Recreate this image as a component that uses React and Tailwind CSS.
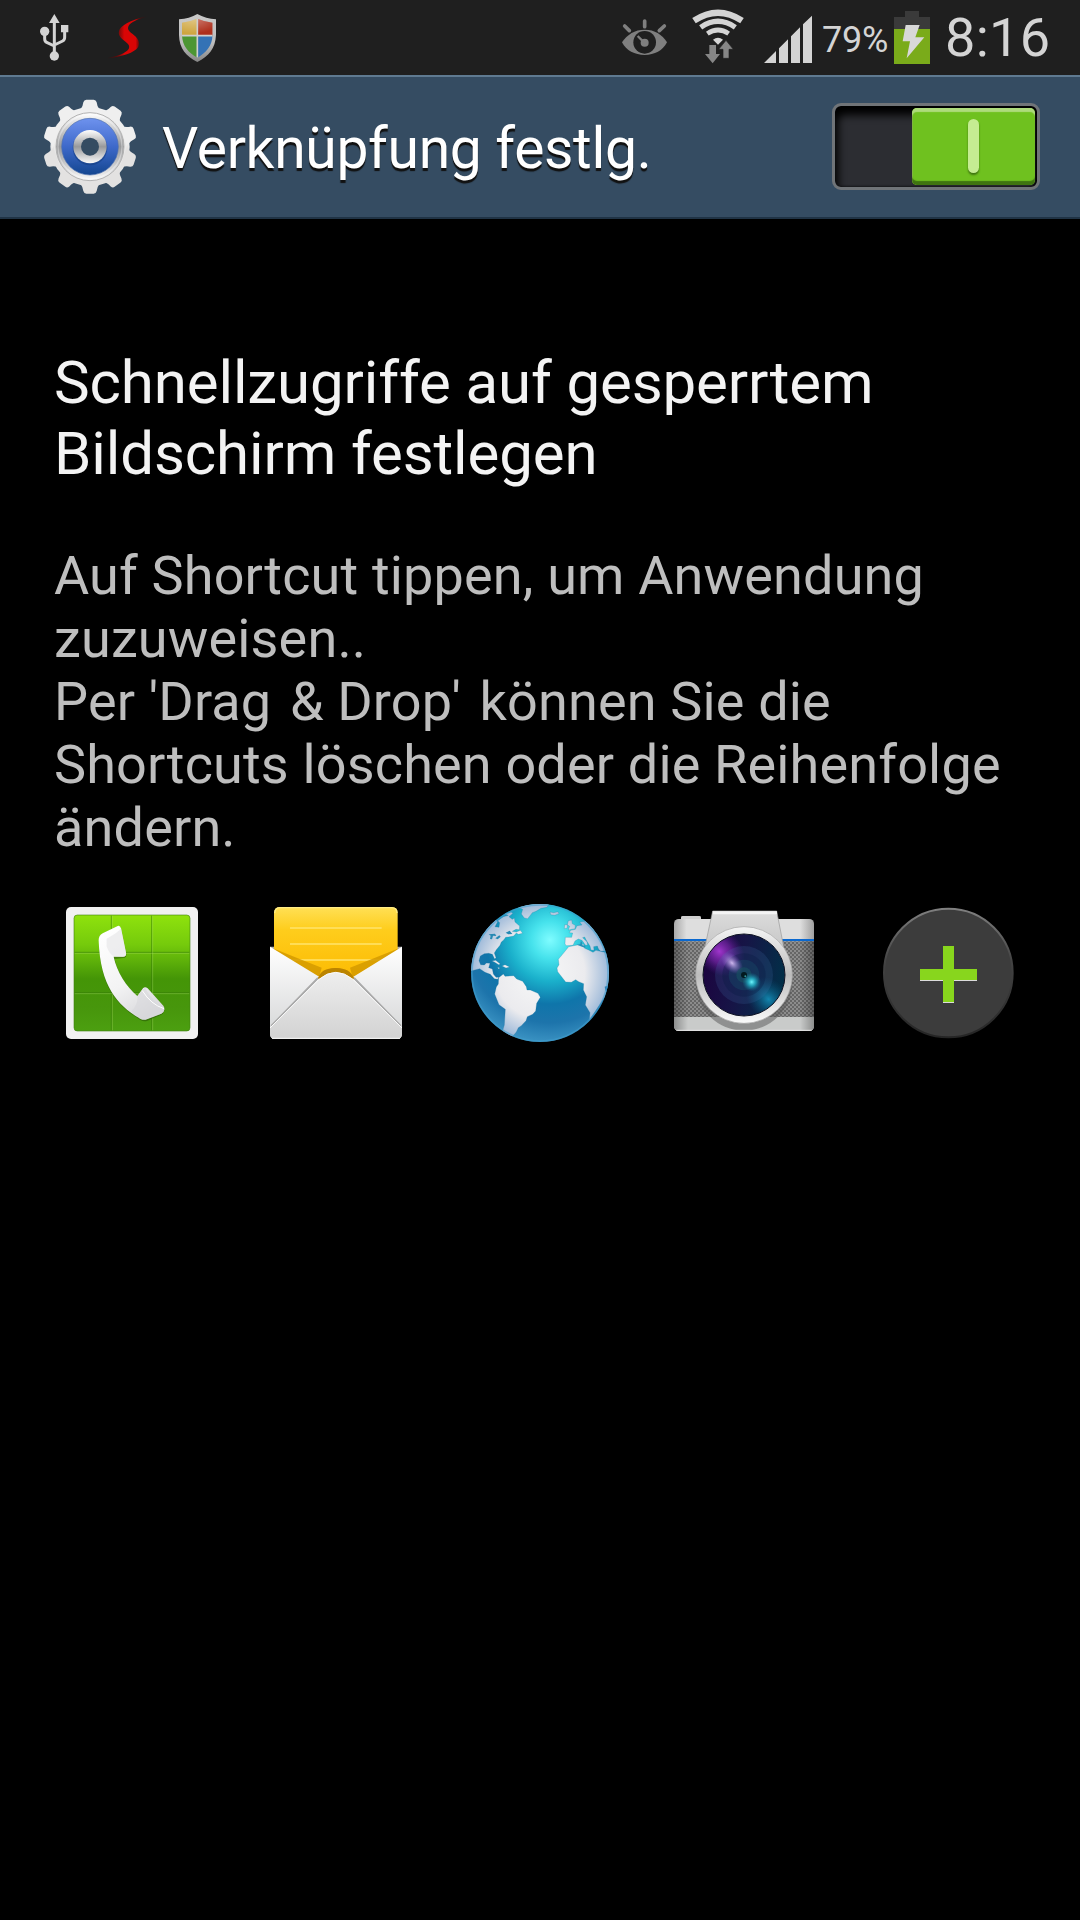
import { useState } from 'react';

// --- Status bar icons ---
const UsbIcon = () => (
    <svg viewBox="120 0 87 225" className="w-[29px] h-[75px] shrink-0" fill="none" stroke="#d4d4d4">
        <path d="M163 60V160M134 100V116Q134 124 140 127L163 138M194 90V112Q194 120 188 123L163 135" strokeWidth="9" />
        <path d="M163 42L179 69H147ZM183 75H205V97H183Z" fill="#d4d4d4" stroke="none" />
        <circle cx="134" cy="94" r="14" fill="#d4d4d4" stroke="none" />
        <circle cx="163" cy="168" r="14" fill="#d4d4d4" stroke="none" />
    </svg>
);

const SwooshIcon = () => (
    <svg viewBox="318 0 123 225" className="w-[41px] h-[75px] shrink-0">
        <defs>
            <linearGradient id="swoosh" x1="0" x2="1" y1="0" y2="0">
                <stop offset="0" stopColor="#500" stopOpacity=".4" />
                <stop offset=".22" stopColor="#700404" stopOpacity=".7" />
                <stop offset=".42" stopColor="#d90505" />
                <stop offset=".7" stopColor="#d90505" />
                <stop offset=".8" stopColor="#700404" stopOpacity=".7" />
                <stop offset="1" stopColor="#400" stopOpacity=".3" />
            </linearGradient>
        </defs>
        <path d="M441 49C405 55 368 70 356 88C350 102 355 110 367 120C381 131 388 136 383 147C375 159 350 169 318 175C362 170 402 158 412 140C418 124 409 113 395 102C383 93 378 87 383 77C390 66 413 56 441 49Z" fill="url(#swoosh)" />
    </svg>
);

const ShieldIcon = () => (
    <svg viewBox="534 0 117 225" className="w-[39px] h-[75px] shrink-0">
        <defs>
            <clipPath id="shieldInner">
                <path d="M592 56Q616 66 638 68V105C636 138 619 158 592 173C565 158 547 138 546 105V68Q569 66 592 56Z" />
            </clipPath>
            <linearGradient id="shieldRim" x1="0" x2="0" y1="0" y2="1">
                <stop offset="0" stopColor="#c9c9c9" />
                <stop offset=".6" stopColor="#bdbdbd" />
                <stop offset="1" stopColor="#858585" />
            </linearGradient>
            <radialGradient id="shieldShine" cx=".4" cy=".1" r=".8">
                <stop offset="0" stopColor="#fff" stopOpacity=".4" />
                <stop offset="1" stopColor="#fff" stopOpacity="0" />
            </radialGradient>
        </defs>
        <path d="M592 42Q618 56 648 58V105C646 146 626 169 592 186C558 169 538 146 537 105V58Q568 56 592 42Z" fill="url(#shieldRim)" />
        <g clipPath="url(#shieldInner)">
            <path d="M540 45H592V107H540Z" fill="#cfa640" />
            <path d="M592 45H645V107H592Z" fill="#ae2f1c" />
            <path d="M540 107H592V185H540Z" fill="#4c9633" />
            <path d="M592 107H645V185H592Z" fill="#3472b5" />
            <path d="M540 45H645V107H540Z" fill="url(#shieldShine)" />
            <path d="M592 45V185M540 107H645" stroke="#cfcfcf" strokeWidth="5" />
        </g>
    </svg>
);

const EyeIcon = () => (
    <svg viewBox="66 0 135 225" className="w-[45px] h-[75px] shrink-0">
        <path d="M66 127C82 103 104 89 134 89S186 103 201 127C188 152 164 165 134 165S79 152 66 127Z" fill="#7f7f7f" />
        <circle cx="134" cy="127" r="34" fill="#1f1f1f" />
        <circle cx="134" cy="128" r="12" fill="#7f7f7f" />
        <path d="M113 108L132 127" stroke="#7f7f7f" strokeWidth="7" />
        <path d="M134 63V80M74 78L88 92M193 78L178 92" stroke="#7f7f7f" strokeWidth="11" strokeLinecap="round" />
    </svg>
);

const WifiIcon = () => (
    <svg viewBox="276 0 156 225" className="w-[52px] h-[75px] shrink-0">
        <g fill="none" stroke="#d4d4d4">
            <path d="M282 62Q354 14 426 62" strokeWidth="19" />
            <path d="M302 82Q354 46 406 82" strokeWidth="16" />
            <path d="M322 101Q354 79 386 101" strokeWidth="14" />
        </g>
        <path d="M339 119Q354 107 369 119L354 134Z" fill="#d4d4d4" />
        <path d="M328 135H348V162H360L338 190L315 162H328Z" fill="#868686" />
        <path d="M369 175V148H356L378 121L400 148H387V175Z" fill="#868686" stroke="#1f1f1f" strokeWidth="2" />
    </svg>
);

const SignalIcon = () => (
    <svg viewBox="492 0 144 225" className="w-[48px] h-[75px] shrink-0">
        <path d="M492 189L528 153V189ZM537 189V145L564 118V189ZM573 189V109L600 82V189ZM609 189V73L636 47V189Z" fill="#d4d4d4" />
    </svg>
);

const BatteryIcon = () => (
    <svg viewBox="882 0 108 225" className="w-[36px] h-[75px] shrink-0">
        <path d="M915 33H957V51H990V87H882V51H915Z" fill="#3a3a3a" />
        <path d="M882 87H990V192H882Z" fill="#7aab1a" />
        <path d="M917 75H959L946 112H973L920 175L930 124H908Z" fill="#d8d8d8" />
    </svg>
);

// --- Title bar ---
const GearIcon = () => (
    <svg viewBox="123 290 294 294" className="w-[98px] h-[98px] shrink-0">
        <defs>
            <linearGradient id="gearBody" x1="0" x2="0" y1="298" y2="580" gradientUnits="userSpaceOnUse">
                <stop offset="0" stopColor="#f3f3f3" />
                <stop offset="1" stopColor="#e0dfde" />
            </linearGradient>
            <linearGradient id="gearRing" x1="0" x2="0" y1="0" y2="1">
                <stop offset="0" stopColor="#fff" />
                <stop offset=".5" stopColor="#98999b" />
                <stop offset="1" stopColor="#fafafa" />
            </linearGradient>
            <linearGradient id="gearBlue" x1="0" x2="0" y1="0" y2="1">
                <stop offset="0" stopColor="#6e92ee" />
                <stop offset=".5" stopColor="#3e69ca" />
                <stop offset="1" stopColor="#134690" />
            </linearGradient>
            <mask id="gearHole" maskUnits="userSpaceOnUse" x="120" y="285" width="300" height="305">
                <path d="M120 285H420V590H120Z" fill="#fff" />
                <circle cx="270" cy="439" r="27" fill="#000" />
            </mask>
        </defs>
        <g mask="url(#gearHole)">
            <circle cx="270" cy="439" r="119" fill="url(#gearBody)" />
            {[0, 36, 72, 108, 144, 180, 216, 252, 288, 324].map((deg) => (
                <path
                    key={deg}
                    d="M227 334Q247 331 250 306Q252 298 259 298H281Q288 298 290 306Q293 331 313 334Z"
                    transform={`rotate(${deg} 270 439)`}
                    fill={deg > 90 && deg < 270 ? '#e3e2e1' : '#efefef'}
                />
            ))}
            <circle cx="270" cy="439" r="102" fill="url(#gearRing)" stroke="#b3b3b3" strokeWidth="3" />
            <circle cx="270" cy="439" r="96" fill="none" stroke="#fff" strokeOpacity=".35" strokeWidth="4" />
            <circle cx="270" cy="439" r="85" fill="url(#gearBlue)" stroke="#4d6fae" strokeWidth="2" />
            <circle cx="270" cy="443" r="52" fill="#12397c" opacity=".5" />
            <circle cx="270" cy="439" r="50" fill="url(#gearRing)" />
        </g>
    </svg>
);

const Toggle = ({ on, onChange }) => (
    <button
        role="switch"
        aria-checked={on}
        aria-label="Verknüpfung"
        onClick={() => onChange(!on)}
        className={`flex items-center w-[208px] h-[87px] p-[2px] rounded-[9px] border-[3px] border-[#707478] bg-[#2c2d32] shadow-[inset_3px_9px_8px_#000,inset_-2px_0_3px_#000] ${on ? 'justify-end' : 'justify-start'}`}
    >
        <span className="flex items-center justify-center w-[123px] h-[77px] rounded-[5px] bg-[#6fc11f] shadow-[inset_0_4px_1px_#aedb7c,inset_0_-4px_1px_#3f7410,inset_1px_0_0_#83b93f]">
            <span className="w-[11px] h-[54px] rounded-full bg-[#c5ec92] shadow-[0_2px_2px_#3f7410]" />
        </span>
    </button>
);

// --- Shortcut icons ---
const PhoneIcon = () => (
    <svg viewBox="-9 0 510 510" className="w-[170px] h-[170px]">
        <defs>
            <linearGradient id="phoneBg" x1="0" x2="0" y1="0" y2="1">
                <stop offset="0" stopColor="#8fe20d" />
                <stop offset=".25" stopColor="#76cb0c" />
                <stop offset=".55" stopColor="#449507" />
                <stop offset=".8" stopColor="#47960c" />
                <stop offset="1" stopColor="#4c9f10" />
            </linearGradient>
            <linearGradient id="handset" x1=".2" x2=".6" y1="0" y2="1">
                <stop offset="0" stopColor="#fff" />
                <stop offset=".6" stopColor="#f3f3f4" />
                <stop offset="1" stopColor="#d9d9dc" />
            </linearGradient>
        </defs>
        <rect x="48" y="51" width="396" height="396" rx="15" fill="#f1f1f1" />
        <rect x="72" y="75" width="348" height="348" rx="10" fill="url(#phoneBg)" stroke="#408010" strokeOpacity=".6" strokeWidth="3" />
        <path d="M184 77V421M305 77V421M74 187H418M74 308H418" stroke="#347a05" strokeOpacity=".7" strokeWidth="2.5" />
        <path d="M187 77V421M308 77V421M74 190H418M74 311H418" stroke="#b0e070" strokeOpacity=".5" strokeWidth="2" />
        <path d="M147 157Q145 139 158 131L203 109Q210 106 213 116L229 192Q230 204 219 204L194 207C202 247 229 292 262 319L279 297Q285 289 293 296L341 350Q344 354 343 361Q342 370 334 374L291 393Q281 396 270 389C204 348 151 296 147 157Z" fill="#244d05" opacity=".5" />
        <path d="M146 153Q145 137 158 130L203 108Q210 105 213 115L228 188Q230 200 219 200H191C200 244 229 290 262 318L279 295Q285 288 293 295L340 347Q344 353 343 359Q342 367 334 371L291 388Q281 392 270 386C204 347 151 290 146 153Z" fill="url(#handset)" />
        <path d="M170 170Q180 195 192 199L219 200Q230 200 228 188L213 115Q207 126 170 146Z" fill="#e6e6e8" opacity=".65" />
        <path d="M262 319Q266 340 244 364Q270 388 285 389L334 371Q343 366 343 358L320 340Q288 305 285 292Z" fill="#d5d5d9" opacity=".5" />
        <path d="M277 302Q302 343 342 356" fill="none" stroke="#fff" strokeWidth="3" />
    </svg>
);

const MailIcon = () => (
    <svg viewBox="3 0 510 510" className="w-[170px] h-[170px]">
        <defs>
            <linearGradient id="letter" x1="0" x2="0" y1="0" y2="1">
                <stop offset="0" stopColor="#ffe055" />
                <stop offset=".3" stopColor="#fecd1c" />
                <stop offset="1" stopColor="#fcb900" />
            </linearGradient>
            <linearGradient id="envelopeSide" x1="0" x2="0" y1="0" y2="1">
                <stop offset="0" stopColor="#fff" />
                <stop offset="1" stopColor="#d4d5d6" />
            </linearGradient>
            <linearGradient id="envelopeFlap" x1="0" x2="0" y1="0" y2="1">
                <stop offset="0" stopColor="#eee" />
                <stop offset="1" stopColor="#d2d2d2" />
            </linearGradient>
        </defs>
        <path d="M60 170H456V260H60Z" fill="#aaa" />
        <path d="M72 69Q72 51 90 51H425Q443 51 443 69V280H72Z" fill="url(#letter)" />
        <path d="M74 69Q75 53 90 53H425Q441 53 441 69" fill="none" stroke="#ffec85" strokeWidth="4" />
        <path d="M120 114H395M120 162H395M120 210H395" stroke="#ffe36b" strokeWidth="5" />
        {/* Shadow of the envelope edges on the letter */}
        <path d="M72 176L215 233L207 262L72 182ZM443 176L300 233L308 262L443 182Z" fill="#d39a00" opacity=".85" />
        <path d="M205 264Q212 234 257 234Q302 234 310 264Z" fill="#bb8400" />
        <path d="M60 170L210 262L308 262L456 170V432Q456 447 441 447H75Q60 447 60 432Z" fill="url(#envelopeSide)" />
        <path d="M203 264Q226 234 257 234Q290 234 313 264L290 300H226Z" fill="#bb8400" />
        <path d="M64 408L204 264M452 408L312 264" stroke="#aaa" strokeWidth="6" />
        <path d="M60 414L207 268Q257 226 309 268L456 414V432Q456 447 441 447H75Q60 447 60 432Z" fill="url(#envelopeFlap)" />
        <path d="M60 414L207 268Q257 226 309 268L456 414" fill="none" stroke="#fbfbfb" strokeWidth="3" />
        <path d="M66 445H450" stroke="#f5f5f5" strokeWidth="3" />
    </svg>
);

const GlobeIcon = () => (
    <svg viewBox="0 0 510 510" className="w-[170px] h-[170px]">
        <defs>
            <radialGradient id="ocean" cx="285" cy="150" r="310" gradientUnits="userSpaceOnUse">
                <stop offset="0" stopColor="#7ffcff" />
                <stop offset=".18" stopColor="#46e2ec" />
                <stop offset=".4" stopColor="#1ab0cb" />
                <stop offset=".62" stopColor="#0f75aa" />
                <stop offset=".8" stopColor="#1d74ab" />
                <stop offset="1" stopColor="#3b93c3" />
            </radialGradient>
            <radialGradient id="land" cx="255" cy="249" r="207" gradientUnits="userSpaceOnUse">
                <stop offset="0" stopColor="#f8f8f8" />
                <stop offset=".65" stopColor="#ebebee" />
                <stop offset="1" stopColor="#9db9d9" />
            </radialGradient>
            <clipPath id="globeClip">
                <circle cx="255" cy="249" r="207" />
            </clipPath>
        </defs>
        <circle cx="255" cy="249" r="207" fill="url(#ocean)" />
        <g clipPath="url(#globeClip)">
            <g fill="url(#land)" stroke="#1b6f9a" strokeOpacity=".35" strokeWidth="2">
                {/* North and Central America */}
                <path d="M40 245V170L80 110L122 88L128 95L120 110L132 112L134 98L128 92L145 80L160 76L148 72L168 66L174 70L162 80L172 88L178 84L180 96L194 108L193 119L183 118L172 124L184 126L196 121L203 130L190 133L184 129L176 138L160 141L152 142L146 150L139 156L135 166L124 179L118 189L123 203L119 207L112 193L101 190L88 191L76 198L72 212L77 224L88 225L94 219L105 220L101 233L112 237L115 252L123 262L131 262L128 268L118 266L106 253L90 247L74 236Z" />
                {/* Greenland and Iceland */}
                <path d="M186 50L230 38L282 42L276 52L258 55L243 64L232 68L218 86L208 84L199 72L203 58Z" />
                <path d="M285 66L296 68L309 65L312 71L299 76L287 74Z" />
                {/* Caribbean */}
                <path d="M111 213L122 211L136 222L131 224L119 217ZM141 228L150 224L164 231L153 234ZM128 232L135 234L130 237Z" />
                {/* South America */}
                <path d="M131 263L145 252L150 259L176 257L185 267L203 274L214 290L216 300L226 300L249 310L256 322L245 340L242 363L233 373L217 380L213 392L199 407L190 413L184 426L172 440L140 432L148 405L151 358L132 344L119 312L124 291L130 282Z" />
                {/* British Isles */}
                <path d="M340 92L350 90L352 101L361 106L360 116L340 120L344 109L337 104ZM329 104L337 104L337 114L328 116Z" />
                {/* Europe */}
                <path d="M347 121L361 118L366 107L381 105L374 96L392 93L410 105L432 140L452 183L437 184L431 178L427 168L416 170L417 181L408 180L405 168L395 153L389 141L383 143L396 155L398 166L391 165L381 151L370 147L360 153L354 166L333 167L330 161L331 142L350 142L353 129L343 128Z" />
                {/* Africa */}
                <path d="M341 170L367 165L386 163L389 175L401 180L414 187L423 181L455 188L470 250L450 320L403 391L405 368L391 345L395 320L385 300L386 281L371 275L362 269L349 277L332 276L308 245L306 234L312 224L310 208L325 190Z" />
            </g>
            {/* Great Lakes, Hudson Bay and the Mediterranean islands */}
            <path d="M101 133L120 131L124 138L114 137L111 148L105 147L107 137ZM121 145L133 136L137 140L128 148ZM152 128L164 122L172 132L160 133Z" fill="#2689b3" />
            <path d="M366 164L376 162L377 154L381 155L381 165L391 168L391 174L377 169Z" fill="#2793b8" />
            <path d="M449 290L465 285V305L452 303Z" fill="#2878ae" />
        </g>
        <circle cx="255" cy="249" r="204" fill="none" stroke="#3f9dcc" strokeOpacity=".55" strokeWidth="5" />
    </svg>
);

const CameraIcon = () => (
    <svg viewBox="-3 0 510 510" className="w-[170px] h-[170px]">
        <defs>
            <linearGradient id="camShell" x1="0" x2="1" y1="0" y2="0">
                <stop offset="0" stopColor="#a9a9a9" />
                <stop offset=".09" stopColor="#dedede" />
                <stop offset=".9" stopColor="#dedede" />
                <stop offset="1" stopColor="#9f9f9f" />
            </linearGradient>
            <linearGradient id="camSides" x1="0" x2="1" y1="0" y2="0">
                <stop offset="0" stopColor="#000" stopOpacity=".3" />
                <stop offset=".1" stopColor="#000" stopOpacity="0" />
                <stop offset=".9" stopColor="#000" stopOpacity="0" />
                <stop offset="1" stopColor="#000" stopOpacity=".3" />
            </linearGradient>
            <pattern id="camGrip" width="12" height="12" patternUnits="userSpaceOnUse">
                <path d="M0 0H12V12H0Z" fill="#8c8c8c" />
                <path d="M0 0H6V6H0ZM6 6H12V12H6Z" fill="#666" />
            </pattern>
            <linearGradient id="camPrism" x1="0" x2="0" y1="0" y2="1">
                <stop offset="0" stopColor="#dcdcdc" />
                <stop offset="1" stopColor="#c2c2c2" />
            </linearGradient>
            <linearGradient id="lensRim" x1="0" x2="0" y1="0" y2="1">
                <stop offset="0" stopColor="#f5f5f5" />
                <stop offset=".5" stopColor="#bdbdbd" />
                <stop offset="1" stopColor="#fafafa" />
            </linearGradient>
            <linearGradient id="lensBase" x1="0" x2="1" y1=".4" y2=".6">
                <stop offset="0" stopColor="#1c0440" />
                <stop offset=".45" stopColor="#161546" />
                <stop offset="1" stopColor="#013048" />
            </linearGradient>
            <radialGradient id="lensPurple">
                <stop offset="0" stopColor="#a035cc" />
                <stop offset=".5" stopColor="#7c26ae" stopOpacity=".65" />
                <stop offset="1" stopColor="#5a1690" stopOpacity="0" />
            </radialGradient>
            <radialGradient id="lensBlue">
                <stop offset="0" stopColor="#1385ae" />
                <stop offset="1" stopColor="#06577c" stopOpacity="0" />
            </radialGradient>
            <radialGradient id="lensGlint">
                <stop offset="0" stopColor="#cdb8ee" />
                <stop offset="1" stopColor="#7b5dc0" stopOpacity="0" />
            </radialGradient>
            <radialGradient id="lensCyan">
                <stop offset="0" stopColor="#6ff6ff" />
                <stop offset=".4" stopColor="#25b8cc" stopOpacity=".8" />
                <stop offset="1" stopColor="#13809a" stopOpacity="0" />
            </radialGradient>
            <clipPath id="camBody">
                <rect x="42" y="87" width="420" height="336" rx="14" />
            </clipPath>
            <clipPath id="lensClip">
                <circle cx="252" cy="255" r="123" />
            </clipPath>
        </defs>
        <path d="M63 82Q63 78 68 78H118Q123 78 123 82V94H63Z" fill="#cfcfcf" />
        <g clipPath="url(#camBody)">
            <path d="M42 87H462V423H42Z" fill="url(#camShell)" />
            <path d="M42 147H462V154H42Z" fill="#0a68cf" />
            <path d="M42 154H462V381H42Z" fill="url(#camGrip)" />
            <path d="M42 381H462V423H42Z" fill="#c9cbca" />
            <path d="M42 154H462V423H42Z" fill="url(#camSides)" />
            <circle cx="252" cy="277" r="145" fill="#555" opacity=".5" />
            <path d="M46 421H458" stroke="#e5e5e5" strokeWidth="3" />
        </g>
        <path d="M158 63H350L370 165V200H136V165Z" fill="url(#camPrism)" stroke="#989898" strokeWidth="2" />
        <path d="M158 68H351" stroke="#f4f4f4" strokeWidth="9" />
        <circle cx="252" cy="255" r="145" fill="url(#lensRim)" stroke="#a5a5a5" strokeWidth="2" />
        <g clipPath="url(#lensClip)">
            <circle cx="252" cy="255" r="123" fill="url(#lensBase)" />
            <ellipse cx="178" cy="184" rx="66" ry="84" fill="url(#lensPurple)" transform="rotate(-45 178 184)" />
            <ellipse cx="326" cy="328" rx="58" ry="75" fill="url(#lensBlue)" transform="rotate(-45 326 328)" />
            <circle cx="252" cy="255" r="87" fill="#4773b0" opacity=".19" />
            <circle cx="252" cy="255" r="65" fill="#07163e" opacity=".3" />
            <circle cx="252" cy="255" r="46" fill="#1b7583" opacity=".2" />
            <ellipse cx="216" cy="219" rx="25" ry="40" fill="url(#lensGlint)" transform="rotate(-45 216 219)" />
            <circle cx="252" cy="255" r="23" fill="#174f61" opacity=".65" />
            <circle cx="275" cy="276" r="28" fill="url(#lensCyan)" />
            <circle cx="252" cy="255" r="9" fill="#02191f" />
            <circle cx="256" cy="259" r="3" fill="#30969a" />
        </g>
        <circle cx="252" cy="255" r="123" fill="none" stroke="#0c1022" strokeWidth="3" />
    </svg>
);

const AddIcon = () => (
    <svg viewBox="-6 0 510 510" className="w-[170px] h-[170px]">
        <defs>
            <linearGradient id="addRim" x1="0" x2="0" y1="0" y2="1">
                <stop offset="0" stopColor="#808080" />
                <stop offset=".4" stopColor="#444" />
                <stop offset="1" stopColor="#252525" />
            </linearGradient>
        </defs>
        <circle cx="250" cy="249" r="193" fill="#3c3c3c" stroke="url(#addRim)" strokeWidth="6" />
        <path d="M234 171H267V240H336V273H267V339H234V273H165V240H234Z" fill="#dcdcdc" />
        <path d="M234 168H267V237H336V270H267V336H234V270H165V237H234Z" fill="#88d61d" />
    </svg>
);

const shortcuts = [
    { name: 'Telefon', icon: PhoneIcon },
    { name: 'Nachrichten', icon: MailIcon },
    { name: 'Internet', icon: GlobeIcon },
    { name: 'Kamera', icon: CameraIcon },
    { name: 'Hinzufügen', icon: AddIcon },
];

const StatusBar = () => (
    <div className="flex justify-between h-[75px] pl-[40px] pr-[31px] bg-[#1f1f1f] text-[#d4d4d4]">
        <div className="flex">
            <UsbIcon />
            <div className="ml-[38px]"><SwooshIcon /></div>
            <div className="ml-[30px]"><ShieldIcon /></div>
        </div>
        <div className="flex">
            <EyeIcon />
            <div className="ml-[25px]"><WifiIcon /></div>
            <div className="ml-[20px]"><SignalIcon /></div>
            <span className="w-[72px] ml-[10px] text-[36px] leading-[80px] tracking-[-0.2px] whitespace-nowrap">79%</span>
            <BatteryIcon />
            <span className="w-[104px] ml-[15px] text-[54px] leading-[75px] tracking-[0.3px] whitespace-nowrap">8:16</span>
        </div>
    </div>
);

export default function App() {
    const [enabled, setEnabled] = useState(true);

    return (
        <div className="w-[1080px] h-[1920px] overflow-hidden bg-black font-['Roboto',sans-serif]">
            <StatusBar />

            <header className="flex items-center h-[144px] pl-[41px] pr-[40px] pb-[2px] bg-[#354c62] border-t-2 border-t-[#5f7a91] border-b-2 border-b-[#203345]">
                <GearIcon />
                <h1 className="ml-[23px] mt-[6px] text-[57px] leading-[70px] tracking-[-0.33px] text-white whitespace-nowrap [text-shadow:0_3px_1px_#111]">
                    Verknüpfung festlg.
                </h1>
                <div className="ml-auto"><Toggle on={enabled} onChange={setEnabled} /></div>
            </header>

            <main className="pt-[128px]">
                <h2 className="px-[54px] text-[60px] leading-[71px] tracking-[-0.12px] text-[#f3f3f3]">
                    Schnellzugriffe auf gesperrtem<br />
                    Bildschirm festlegen
                </h2>
                <p className="mt-[55px] px-[54px] text-[54px] leading-[63px] tracking-[0.16px] text-[#bebebe] whitespace-nowrap">
                    Auf Shortcut tippen, um Anwendung<br />
                    zuzuweisen..<br />
                    Per 'Drag <span className="ml-[5px]">&amp;</span> Drop<span className="mr-[5px]">'</span> können Sie die<br />
                    Shortcuts löschen oder die Reihenfolge<br />
                    ändern.
                </p>
                <div className="grid grid-cols-5 mt-[31px] px-[30px]">
                    {shortcuts.map((item) => (
                        <button key={item.name} aria-label={item.name} className="flex justify-center">
                            <item.icon />
                        </button>
                    ))}
                </div>
            </main>
        </div>
    );
}
